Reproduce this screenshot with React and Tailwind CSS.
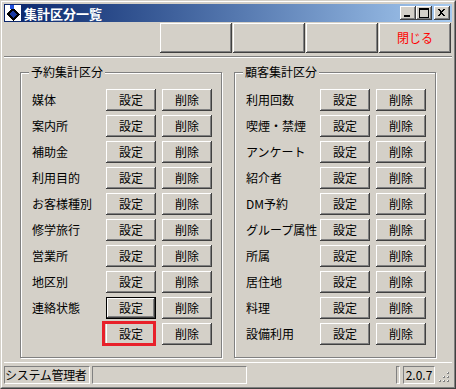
import React from 'react';

const bevel =
  'shadow-[inset_-1px_-1px_#404040,inset_1px_1px_#ffffff,inset_-2px_-2px_#808080,inset_2px_2px_#d4d0c8]';

const leftRows = ['媒体', '案内所', '補助金', '利用目的', 'お客様種別', '修学旅行', '営業所', '地区別', '連絡状態', ''];
const rightRows = ['利用回数', '喫煙・禁煙', 'アンケート', '紹介者', 'DM予約', 'グループ属性', '所属', '居住地', '料理', '設備利用'];

const Btn = ({ children, className = '', focused = false }) => (
  <div
    className={`flex items-center justify-center bg-[#d4d0c8] text-[12px] leading-none ${
      focused
        ? 'border border-black shadow-[inset_-1px_-1px_#404040,inset_1px_1px_#ffffff,inset_-2px_-2px_#808080]'
        : bevel
    } ${className}`}
  >
    {children}
  </div>
);

const Row = ({ label, focused, marked }) => (
  <div className="flex items-center h-[22px]">
    <span className="w-[74px] text-[12px] leading-none whitespace-nowrap">{label}</span>
    <div className="relative">
      <Btn focused={focused} className="w-[50px] h-[22px]">設定</Btn>
      {marked && (
        <span className="absolute -left-[4px] -top-[2px] w-[54px] h-[25px] border-[3px] border-[#e8202a]" />
      )}
    </div>
    <Btn className="ml-[6px] w-[50px] h-[22px]">削除</Btn>
  </div>
);

const Group = ({ title, rows, className = '' }) => (
  <div
    className={`relative w-[202px] h-[286px] border border-[#808080] shadow-[inset_1px_1px_#ffffff,1px_1px_#ffffff] ${className}`}
  >
    <span className="absolute left-[8px] -top-[8px] px-[2px] bg-[#d4d0c8] text-[12px] leading-[14px]">{title}</span>
    <div className="flex flex-col gap-[4px] pt-[16px] pl-[11px]">
      {rows.map((r, i) => (
        <Row key={i} label={r} focused={r === '連絡状態'} marked={title === '予約集計区分' && i === rows.length - 1} />
      ))}
    </div>
  </div>
);

const CapBtn = ({ children, className = '' }) => (
  <div className={`w-[16px] h-[14px] bg-[#d4d0c8] ${bevel} ${className}`}>
    <svg width="16" height="14" shapeRendering="crispEdges">{children}</svg>
  </div>
);

const sunken = 'border border-t-[#808080] border-l-[#808080] border-r-white border-b-white';

const App = () => {
  return (
    <div className="w-[456px] h-[389px] bg-[#d4d0c8] text-black font-['MS_UI_Gothic','Noto_Sans_CJK_JP',sans-serif] border border-t-[#d4d0c8] border-l-[#d4d0c8] border-r-[#404040] border-b-[#404040]">
      <div className="h-full flex flex-col border border-t-white border-l-white border-r-[#808080] border-b-[#808080] p-[2px]">
        {/* title bar */}
        <div className="h-[18px] flex items-center bg-gradient-to-r from-[#0a246a] to-[#a6caf0]">
          <svg width="16" height="16" className="ml-[1px]" shapeRendering="crispEdges">
            <rect x="0" y="0" width="16" height="16" fill="#ffffff" />
            <polygon points="8,3 15,9 8,16 1,9" fill="#000000" />
            <polygon points="8,6 12,9 8,13 4,9" fill="#1a3aa0" />
            <rect x="5" y="0" width="4" height="4" fill="#2050e0" />
          </svg>
          <span className="ml-[3px] text-white font-bold text-[13px] leading-none">集計区分一覧</span>
          <div className="ml-auto flex items-center">
            <CapBtn>
              <rect x="4" y="9" width="6" height="2" fill="#000" />
            </CapBtn>
            <CapBtn>
              <rect x="3" y="2" width="9" height="9" fill="none" stroke="#000" strokeWidth="1" transform="translate(0.5 0.5)" />
              <rect x="3" y="2" width="10" height="2" fill="#000" />
            </CapBtn>
            <CapBtn className="ml-[2px] mr-[2px]">
              <path d="M4 3h2l1.5 2 1.5-2h2l-2.5 3.5 2.5 3.5h-2l-1.5-2-1.5 2h-2l2.5-3.5z" fill="#000" />
            </CapBtn>
          </div>
        </div>

        {/* toolbar */}
        <div className="mt-[1px] h-[30px] flex justify-end pr-[1px]">
          <Btn className="w-[72px] h-[30px] mr-[1px]" />
          <Btn className="w-[72px] h-[30px] mr-[1px]" />
          <Btn className="w-[72px] h-[30px] mr-[1px]" />
          <Btn className="w-[72px] h-[30px] text-[#ff0000]">閉じる</Btn>
        </div>
        <div className="mt-[3px] h-[2px] border-t border-t-[#808080] border-b border-b-white" />

        {/* groups */}
        <div className="flex-1 flex pt-[14px] pl-[16px] gap-[12px]">
          <Group title="予約集計区分" rows={leftRows} />
          <Group title="顧客集計区分" rows={rightRows} />
        </div>

        {/* status bar */}
        <div className="h-[23px] border-t border-t-white pt-[3px] flex items-start">
          <div className={`w-[86px] h-[18px] flex items-center overflow-hidden whitespace-nowrap text-[12px] leading-none tracking-[-0.3px] ${sunken}`}>
            システム管理者
          </div>
          <div className={`ml-[2px] w-[155px] h-[18px] ${sunken}`} />
          <div className={`ml-auto w-[4px] h-[18px] ${sunken}`} />
          <div className={`ml-[3px] w-[32px] h-[18px] flex items-center justify-center text-[12px] leading-none ${sunken}`}>
            2.0.7
          </div>
          <svg width="17" height="18" shapeRendering="crispEdges">
            {[
              [12, 6], [8, 10], [12, 10], [4, 14], [8, 14], [12, 14],
            ].map(([x, y], i) => (
              <g key={i}>
                <rect x={x} y={y} width="2" height="2" fill="#808080" />
                <rect x={x} y={y} width="1" height="1" fill="#ffffff" />
              </g>
            ))}
          </svg>
        </div>
      </div>
    </div>
  );
};

export default App;
